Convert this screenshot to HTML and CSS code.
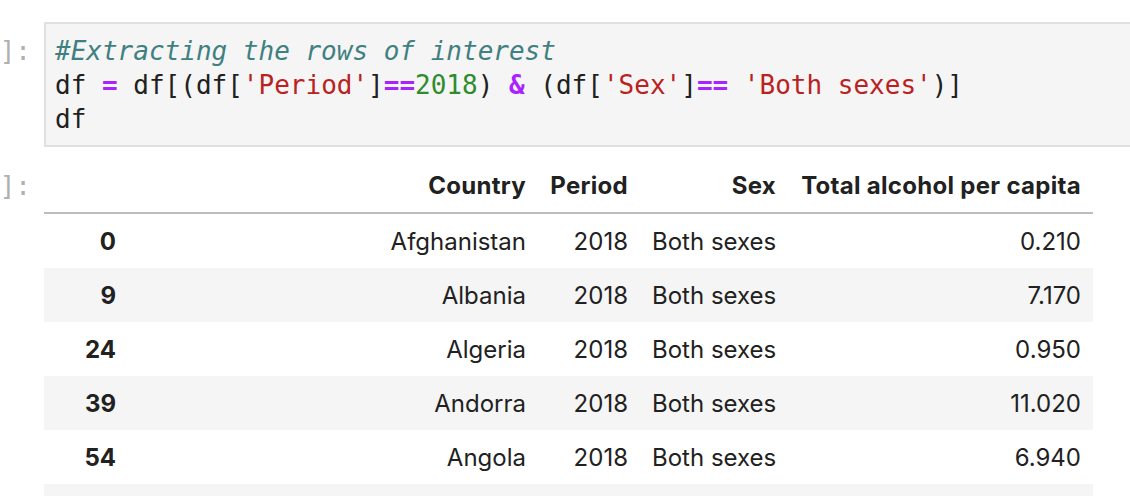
FILE: index.html
```html
<!DOCTYPE html>
<html>
<head>
<meta charset="utf-8">
<link rel="stylesheet" href="styles.css">
</head>
<body>
<div class="notebook">
  <div class="cell input-cell">
    <div class="prompt prompt-in">]:</div>
    <div class="code"><div class="line"><span class="c">#Extracting the rows of interest</span></div><div class="line">df <span class="o">=</span> df[(df[<span class="s">'Period'</span>]<span class="o">==</span><span class="n">2018</span>) <span class="o">&amp;</span> (df[<span class="s">'Sex'</span>]<span class="o">==</span> <span class="s">'Both sexes'</span>)]</div><div class="line">df</div></div>
  </div>
  <div class="cell output-cell">
    <div class="prompt prompt-out">]:</div>
    <div class="output">
      <table class="dataframe">
        <colgroup>
          <col class="c-idx"><col class="c-country"><col class="c-period"><col class="c-sex"><col class="c-total">
        </colgroup>
        <thead>
          <tr><th></th><th>Country</th><th>Period</th><th>Sex</th><th>Total alcohol per capita</th></tr>
        </thead>
        <tbody>
          <tr><th>0</th><td>Afghanistan</td><td>2018</td><td>Both sexes</td><td>0.210</td></tr>
          <tr><th>9</th><td>Albania</td><td>2018</td><td>Both sexes</td><td>7.170</td></tr>
          <tr><th>24</th><td>Algeria</td><td>2018</td><td>Both sexes</td><td>0.950</td></tr>
          <tr><th>39</th><td>Andorra</td><td>2018</td><td>Both sexes</td><td>11.020</td></tr>
          <tr><th>54</th><td>Angola</td><td>2018</td><td>Both sexes</td><td>6.940</td></tr>
          <tr class="empty-row"><th></th><td></td><td></td><td></td><td></td></tr>
        </tbody>
      </table>
    </div>
  </div>
</div>
</body>
</html>
```
FILE: styles.css
```css
html, body {
  margin: 0;
  padding: 0;
  background: #ffffff;
}
.notebook {
  width: 1130px;
  height: 496px;
  overflow: hidden;
}
.cell {
  display: flex;
  align-items: flex-start;
}
.input-cell {
  margin-top: 22px;
}
.output-cell {
  margin-top: 11px;
}
.prompt {
  flex: 0 0 44px;
  width: 44px;
  box-sizing: border-box;
  padding-right: 13px;
  display: flex;
  justify-content: flex-end;
  font-family: "DejaVu Sans Mono", monospace;
  font-size: 26px;
  color: #b0b0b0;
  white-space: nowrap;
}
.prompt-in {
  padding-top: 12px;
  line-height: 34px;
}
.prompt-out {
  padding-top: 13px;
  line-height: 30px;
}
.code {
  flex: 0 0 auto;
  width: 1110px;
  box-sizing: border-box;
  background: #f5f5f5;
  border: 2px solid #e0e0e0;
  padding: 10px 9px 9px 9px;
  font-family: "DejaVu Sans Mono", monospace;
  font-size: 26px;
  line-height: 34px;
  color: #212121;
  white-space: pre;
}
.code .c {
  color: #408080;
  font-style: italic;
}
.code .o {
  color: #aa22ff;
  font-weight: bold;
}
.code .s {
  color: #ba2121;
}
.code .n {
  color: #2e8b2e;
}
.output {
  flex: 0 0 auto;
}
.dataframe {
  border-collapse: collapse;
  table-layout: fixed;
  width: 1049px;
  font-family: "Inter", "Liberation Sans", sans-serif;
  font-size: 24px;
  line-height: 30px;
  color: #212121;
}
.c-idx { width: 84px; }
.c-country { width: 410px; }
.c-period { width: 102px; }
.c-sex { width: 148px; }
.c-total { width: 305px; }
.dataframe th,
.dataframe td {
  padding: 13px 12px 11px 12px;
  text-align: right;
  white-space: nowrap;
}
.dataframe th {
  font-weight: bold;
}
.dataframe thead th {
  letter-spacing: 0.3px;
}
.dataframe td {
  font-weight: normal;
}
.dataframe thead th {
  border-bottom: 2px solid #bdbdbd;
}
.dataframe tbody tr:nth-child(even) {
  background: #f5f5f5;
}
.dataframe .empty-row th,
.dataframe .empty-row td {
  height: 30px;
}
```
